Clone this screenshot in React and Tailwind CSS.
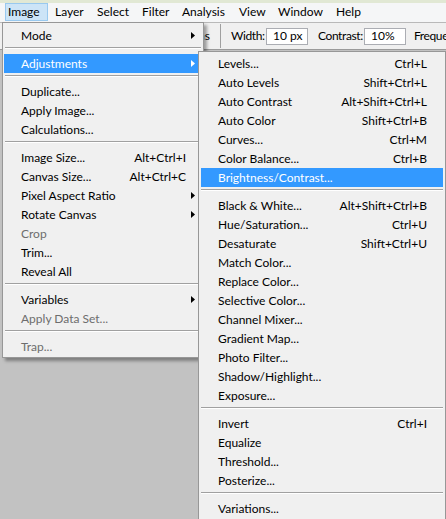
import React from 'react';

const menuBar = [
    { label: 'Image', width: 'w-[47px]' },
    { label: 'Layer', width: 'w-[42px]' },
    { label: 'Select', width: 'w-[45px]' },
    { label: 'Filter', width: 'w-[40px]' },
    { label: 'Analysis', width: 'w-[57px]' },
    { label: 'View', width: 'w-[39px]' },
    { label: 'Window', width: 'w-[58px]' },
    { label: 'Help', width: 'w-[40px]' },
];

const imageMenu = [
    { label: 'Mode', arrow: true },
    'sep',
    { label: 'Adjustments', arrow: true, active: true },
    'sep',
    { label: 'Duplicate...' },
    { label: 'Apply Image...' },
    { label: 'Calculations...' },
    'sep',
    { label: 'Image Size...', shortcut: 'Alt+Ctrl+I' },
    { label: 'Canvas Size...', shortcut: 'Alt+Ctrl+C' },
    { label: 'Pixel Aspect Ratio', arrow: true },
    { label: 'Rotate Canvas', arrow: true },
    { label: 'Crop', disabled: true },
    { label: 'Trim...' },
    { label: 'Reveal All' },
    'sep',
    { label: 'Variables', arrow: true },
    { label: 'Apply Data Set...', disabled: true },
    'sep',
    { label: 'Trap...', disabled: true },
];

const adjustments = [
    { label: 'Levels...', shortcut: 'Ctrl+L' },
    { label: 'Auto Levels', shortcut: 'Shift+Ctrl+L' },
    { label: 'Auto Contrast', shortcut: 'Alt+Shift+Ctrl+L' },
    { label: 'Auto Color', shortcut: 'Shift+Ctrl+B' },
    { label: 'Curves...', shortcut: 'Ctrl+M' },
    { label: 'Color Balance...', shortcut: 'Ctrl+B' },
    { label: 'Brightness/Contrast...', active: true },
    'sep',
    { label: 'Black & White...', shortcut: 'Alt+Shift+Ctrl+B' },
    { label: 'Hue/Saturation...', shortcut: 'Ctrl+U' },
    { label: 'Desaturate', shortcut: 'Shift+Ctrl+U' },
    { label: 'Match Color...' },
    { label: 'Replace Color...' },
    { label: 'Selective Color...' },
    { label: 'Channel Mixer...' },
    { label: 'Gradient Map...' },
    { label: 'Photo Filter...' },
    { label: 'Shadow/Highlight...' },
    { label: 'Exposure...' },
    'sep',
    { label: 'Invert', shortcut: 'Ctrl+I' },
    { label: 'Equalize' },
    { label: 'Threshold...' },
    { label: 'Posterize...' },
    'sep',
    { label: 'Variations...' },
];

const Arrow = ({ white }) => (
    <svg width="4" height="7" viewBox="0 0 4 7">
        <polygon points="0,0 4,3.5 0,7" fill={white ? '#ffffff' : '#000000'} />
    </svg>
);

const MenuList = ({ items, inset }) => (
    <>
        {items.map((item, i) => {
            if (item === 'sep') {
                return (
                    <div key={i} className="h-[9px] pt-[2px] mx-[2px]">
                        <div className="border-t border-[#a0a0a0] border-b border-b-white" />
                    </div>
                );
            }
            const color = item.active ? 'bg-[#3399ff] text-white' : item.disabled ? 'text-[#6d6d6d]' : 'text-black';
            return (
                <div key={i} className={`flex items-center h-[19px] ${inset} ${color}`}>
                    <span className="flex-1 whitespace-nowrap">{item.label}</span>
                    {item.shortcut && <span className="whitespace-nowrap">{item.shortcut}</span>}
                    <span className="w-[16px] shrink-0 flex items-center pl-[5px]">
                        {item.arrow && <Arrow white={item.active} />}
                    </span>
                </div>
            );
        })}
    </>
);

export default function App() {
    return (
        <div
            className="relative w-[446px] h-[519px] overflow-hidden bg-[#c2c2c2] text-[12px] leading-none"
            style={{ fontFamily: 'Lato, "Noto Sans", sans-serif' }}
        >
            {/* menu bar */}
            <div className="h-[22px] bg-[#f5f6f7] border-t-[3px] border-[#e1e8d4] flex pl-[5px]">
                {menuBar.map((m) => (
                    <div key={m.label} className={`${m.width} h-[18px] flex items-center`}>
                        {m.label === 'Image' ? (
                            <div className="w-[43px] h-[18px] flex items-center pl-[2px] bg-[#cce4f7] border border-[#99c9ef]">
                                {m.label}
                            </div>
                        ) : (
                            <span className="pl-[3px]">{m.label}</span>
                        )}
                    </div>
                ))}
            </div>

            {/* options bar */}
            <div className="h-[28px] bg-[#f0f0f0] border-t border-[#b9b9b9] border-b border-b-[#9a9a9a] flex items-center whitespace-nowrap">
                <div className="w-[220px] shrink-0 flex justify-end items-center gap-[4px] pr-[10px]">
                    <span className="w-[13px] h-[13px] bg-white border border-[#707070]" />
                    <span>Anti-alias</span>
                </div>
                <div className="w-px shrink-0 self-stretch bg-[#a0a0a0] my-[1px]" />
                <span className="ml-[10px] w-[35px] shrink-0 tracking-[-0.4px]">Width:</span>
                <div className="w-[42px] h-[17px] shrink-0 bg-white border border-[#abadb3] flex items-center pl-[6px]">10 px</div>
                <span className="ml-[10px] w-[46px] shrink-0 tracking-[-0.4px]">Contrast:</span>
                <div className="w-[42px] h-[17px] shrink-0 bg-white border border-[#abadb3] flex items-center pl-[6px]">10%</div>
                <span className="ml-[8px] shrink-0 tracking-[-0.4px]">Frequency:</span>
            </div>

            {/* Image menu */}
            <div className="absolute left-[2px] top-[22px] w-[202px] bg-[#f0f0f0] border border-[#979797] pt-[3px] pb-[1px] shadow-[3px_3px_3px_rgba(0,0,0,0.35)]">
                <MenuList items={imageMenu} inset="mx-[1px] pl-[17px]" />
            </div>

            {/* Adjustments submenu */}
            <div className="absolute left-[198px] top-[51px] w-[248px] bg-[#f0f0f0] border border-[#979797] pt-[2px] pb-[3px]">
                <MenuList items={adjustments} inset="mx-[2px] pl-[17px]" />
            </div>
        </div>
    );
}
